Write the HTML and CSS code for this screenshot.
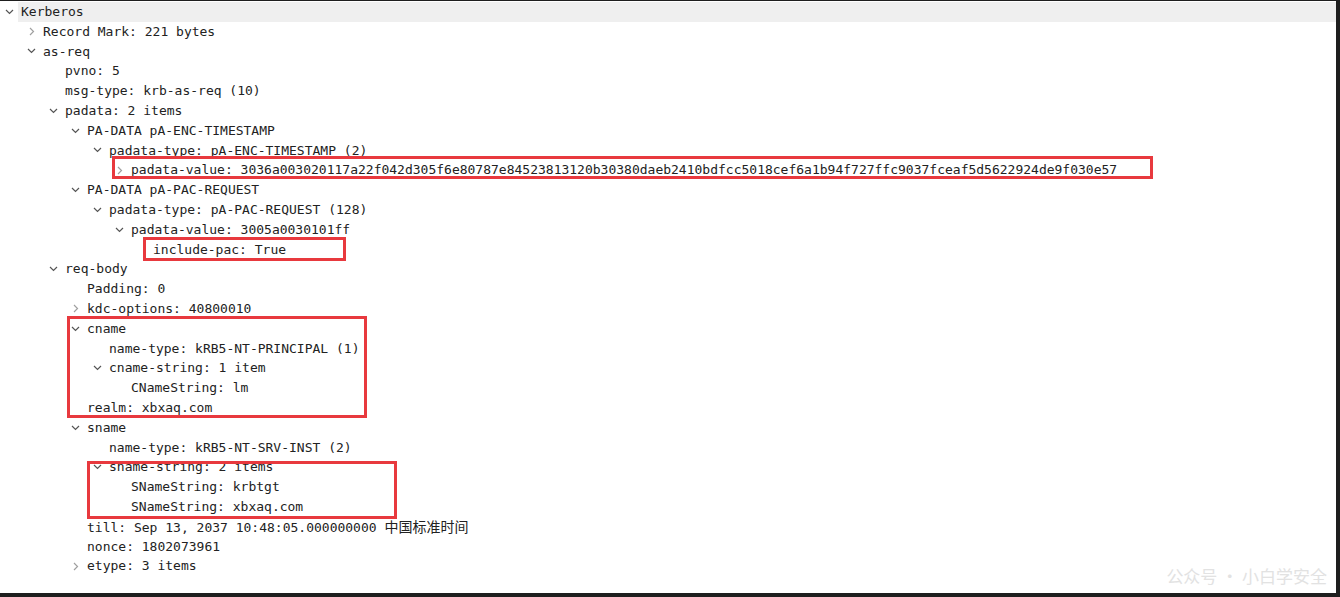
FILE: index.html
```html
<!DOCTYPE html>
<html lang="en">
<head>
  <meta charset="UTF-8">
  <title>Kerberos AS-REQ</title>
  <link rel="stylesheet" href="styles.css">
</head>
<body>
  <div class="frame">
    <div class="tree">
      <div class="row l0 sel"><span class="tw open"></span><span class="label">Kerberos</span></div>
      <div class="row l1"><span class="tw shut"></span><span class="label">Record Mark: 221 bytes</span></div>
      <div class="row l1"><span class="tw open"></span><span class="label">as-req</span></div>
      <div class="row l2"><span class="tw"></span><span class="label">pvno: 5</span></div>
      <div class="row l2"><span class="tw"></span><span class="label">msg-type: krb-as-req (10)</span></div>
      <div class="row l2"><span class="tw open"></span><span class="label">padata: 2 items</span></div>
      <div class="row l3"><span class="tw open"></span><span class="label">PA-DATA pA-ENC-TIMESTAMP</span></div>
      <div class="row l4"><span class="tw open"></span><span class="label">padata-type: pA-ENC-TIMESTAMP (2)</span></div>
      <div class="row l5"><span class="tw shut"></span><span class="label">padata-value: 3036a003020117a22f042d305f6e80787e84523813120b30380daeb2410bdfcc5018cef6a1b94f727ffc9037fceaf5d5622924de9f030e57</span></div>
      <div class="row l3"><span class="tw open"></span><span class="label">PA-DATA pA-PAC-REQUEST</span></div>
      <div class="row l4"><span class="tw open"></span><span class="label">padata-type: pA-PAC-REQUEST (128)</span></div>
      <div class="row l5"><span class="tw open"></span><span class="label">padata-value: 3005a0030101ff</span></div>
      <div class="row l6"><span class="tw"></span><span class="label">include-pac: True</span></div>
      <div class="row l2"><span class="tw open"></span><span class="label">req-body</span></div>
      <div class="row l3"><span class="tw"></span><span class="label">Padding: 0</span></div>
      <div class="row l3"><span class="tw shut"></span><span class="label">kdc-options: 40800010</span></div>
      <div class="row l3"><span class="tw open"></span><span class="label">cname</span></div>
      <div class="row l4"><span class="tw"></span><span class="label">name-type: kRB5-NT-PRINCIPAL (1)</span></div>
      <div class="row l4"><span class="tw open"></span><span class="label">cname-string: 1 item</span></div>
      <div class="row l5"><span class="tw"></span><span class="label">CNameString: lm</span></div>
      <div class="row l3"><span class="tw"></span><span class="label">realm: xbxaq.com</span></div>
      <div class="row l3"><span class="tw open"></span><span class="label">sname</span></div>
      <div class="row l4"><span class="tw"></span><span class="label">name-type: kRB5-NT-SRV-INST (2)</span></div>
      <div class="row l4"><span class="tw open"></span><span class="label">sname-string: 2 items</span></div>
      <div class="row l5"><span class="tw"></span><span class="label">SNameString: krbtgt</span></div>
      <div class="row l5"><span class="tw"></span><span class="label">SNameString: xbxaq.com</span></div>
      <div class="row l3"><span class="tw"></span><span class="label">till: Sep 13, 2037 10:48:05.000000000 <span class="cjk">中国标准时间</span></span></div>
      <div class="row l3"><span class="tw"></span><span class="label">nonce: 1802073961</span></div>
      <div class="row l3"><span class="tw shut"></span><span class="label">etype: 3 items</span></div>
    </div>

    <!-- red annotation boxes -->
    <div class="mark m1"></div>
    <div class="mark m2"></div>
    <div class="mark m3"></div>
    <div class="mark m4"></div>

    <div class="watermark">公众号 · 小白学安全</div>
  </div>

  <script>
    const down = '<svg width="9" height="6" viewBox="0 0 9 6"><polyline points="1,1 4.5,4.5 8,1" fill="none" stroke="#555" stroke-width="1.2"/></svg>';
    const right = '<svg width="6" height="9" viewBox="0 0 6 9"><polyline points="1,1 4.5,4.5 1,8" fill="none" stroke="#a0a0a0" stroke-width="1.2"/></svg>';
    document.querySelectorAll('.tw.open').forEach(el => el.innerHTML = down);
    document.querySelectorAll('.tw.shut').forEach(el => el.innerHTML = right);
  </script>
</body>
</html>
```

FILE: styles.css
```css
html, body {
  margin: 0;
  height: 597px;
  background-color: #1e1e1e;
  overflow: hidden;
}
.frame {
  position: relative;
  width: 1336px;
  height: 592px;
  background-color: #fff;
  border-top: 1px solid #1e1e1e;
}
.tree {
  padding-top: 1px;
  font-family: "DejaVu Sans Mono", "Liberation Mono", monospace;
  font-size: 13px;
  color: #222;
}
.row {
  height: 19.8px;
  display: flex;
  align-items: center;
  white-space: pre;
}
.l0 { padding-left: 2px; }
.l1 { padding-left: 24px; }
.l2 { padding-left: 46px; }
.l3 { padding-left: 68px; }
.l4 { padding-left: 90px; }
.l5 { padding-left: 112px; }
.l6 { padding-left: 134px; }
.tw {
  width: 16px;
  height: 100%;
  display: flex;
  align-items: center;
  padding-left: 3px;
  box-sizing: border-box;
  flex-shrink: 0;
}
.tw.shut {
  padding-left: 5px;
}
.label {
  display: block;
  padding-left: 3px;
  height: 100%;
  line-height: 19.8px;
}
.sel .label {
  flex: 1;
  background-color: #efefef;
}
.cjk {
  font-family: "Noto Sans CJK SC", sans-serif;
  font-size: 14px;
}
.mark {
  position: absolute;
  border: 3px solid #e8393e;
  box-sizing: border-box;
}
.m1 { left: 112px; top: 155px; width: 1041px; height: 23px; }
.m2 { left: 143px; top: 236px; width: 203px; height: 24px; }
.m3 { left: 67px; top: 315px; width: 300px; height: 102px; }
.m4 { left: 87px; top: 460px; width: 310px; height: 58px; }
.watermark {
  position: absolute;
  right: 9px;
  bottom: 7px;
  font-family: "Noto Sans CJK SC", sans-serif;
  font-size: 17px;
  line-height: 20px;
  color: #e2e2e2;
}
```
